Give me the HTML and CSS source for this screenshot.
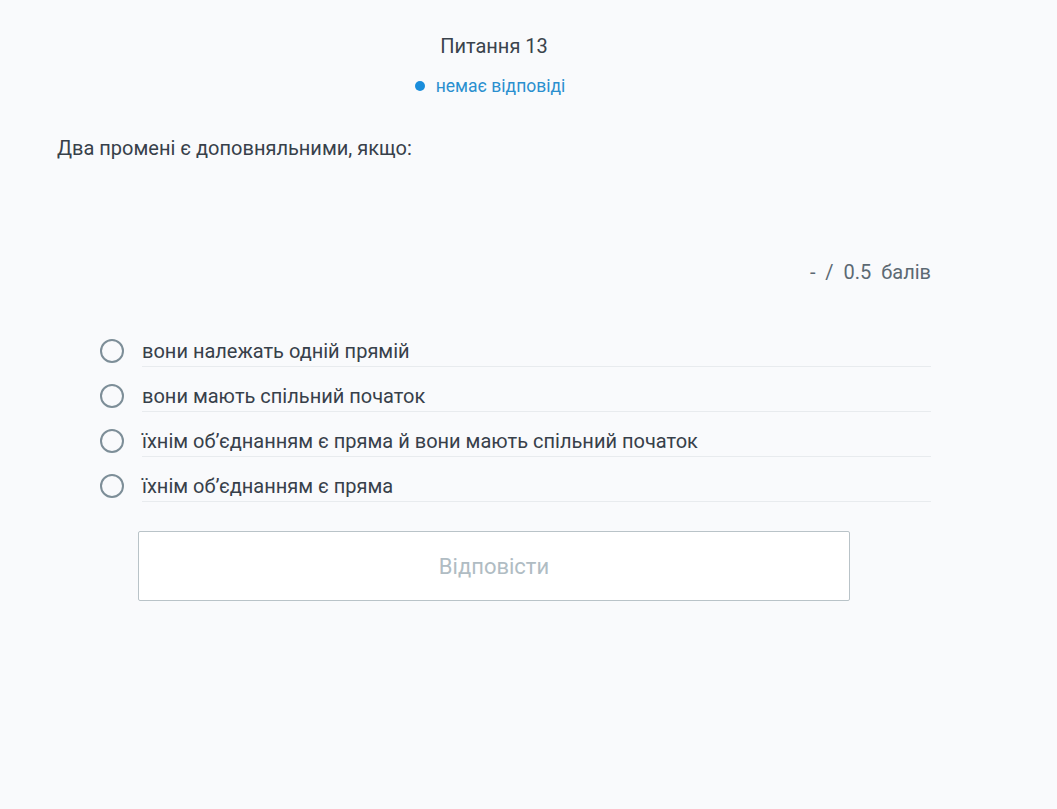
FILE: index.html
```html
<!DOCTYPE html>
<html lang="uk">
<head>
    <meta charset="UTF-8">
    <meta name="viewport" content="width=device-width, initial-scale=1.0">
    <title>Питання 13</title>
    <link rel="stylesheet" href="styles.css">
</head>
<body>

    <div class="question">
        <div class="question-header">
            <div class="question-title">Питання 13</div>
            <div class="question-status">
                <span class="status-dot"></span>
                <span>немає відповіді</span>
            </div>
        </div>

        <div class="question-text">Два промені є доповняльними, якщо:</div>

        <div class="question-points">-&nbsp; /&nbsp; 0.5&nbsp; балів</div>

        <ul class="answers">
            <li class="answer">
                <span class="radio"></span>
                <span class="answer-label">вони належать одній прямій</span>
            </li>
            <li class="answer">
                <span class="radio"></span>
                <span class="answer-label">вони мають спільний початок</span>
            </li>
            <li class="answer">
                <span class="radio"></span>
                <span class="answer-label">їхнім об’єднанням є пряма й вони мають спільний початок</span>
            </li>
            <li class="answer">
                <span class="radio"></span>
                <span class="answer-label">їхнім об’єднанням є пряма</span>
            </li>
        </ul>

        <div class="submit-row">
            <button class="submit-btn" disabled>Відповісти</button>
        </div>
    </div>

</body>
</html>
```

FILE: styles.css
```css
body {
    margin: 0;
    background-color: #f9fafc;
    color: #37404a;
    font-family: Roboto, "Noto Sans", Arial, sans-serif;
}
.question {
    width: 874px;
    padding: 34px 0 0 57px;
}
.question-header {
    display: flex;
    flex-direction: column;
    align-items: center;
    gap: 16px;
}
.question-title {
    font-size: 20px;
    line-height: 24px;
    color: #3a434c;
}
.question-status {
    display: flex;
    align-items: center;
    gap: 11px;
    font-size: 17.5px;
    line-height: 24px;
    color: #2a8fcf;
    margin-right: 8px;
}
.status-dot {
    width: 10px;
    height: 10px;
    border-radius: 50%;
    background-color: #1a8ddb;
}
.question-text {
    margin-top: 37px;
    font-size: 20px;
    line-height: 26px;
    color: #37404a;
}
.question-points {
    margin-top: 98px;
    text-align: right;
    font-size: 20px;
    line-height: 26px;
    color: #5c6973;
}
.answers {
    list-style: none;
    margin: 37px 0 0 0;
    padding: 0 0 0 43px;
}
.answer {
    display: flex;
    height: 45px;
}
.radio {
    flex: none;
    align-self: center;
    width: 20px;
    height: 20px;
    margin-top: 13px;
    margin-right: 18px;
    border: 2px solid #7d8e98;
    border-radius: 50%;
}
.answer-label {
    flex: 1;
    display: flex;
    align-items: center;
    padding-top: 14px;
    border-bottom: 1px solid #e8ebee;
    font-size: 20px;
    color: #37404a;
}
.submit-row {
    margin-top: 29px;
    padding-left: 81px;
}
.submit-btn {
    width: 712px;
    height: 70px;
    background-color: #ffffff;
    border: 1px solid #b9c3c8;
    border-radius: 2px;
    font-family: Roboto, "Noto Sans", Arial, sans-serif;
    font-size: 22px;
    color: #b0bcc3;
}
```
